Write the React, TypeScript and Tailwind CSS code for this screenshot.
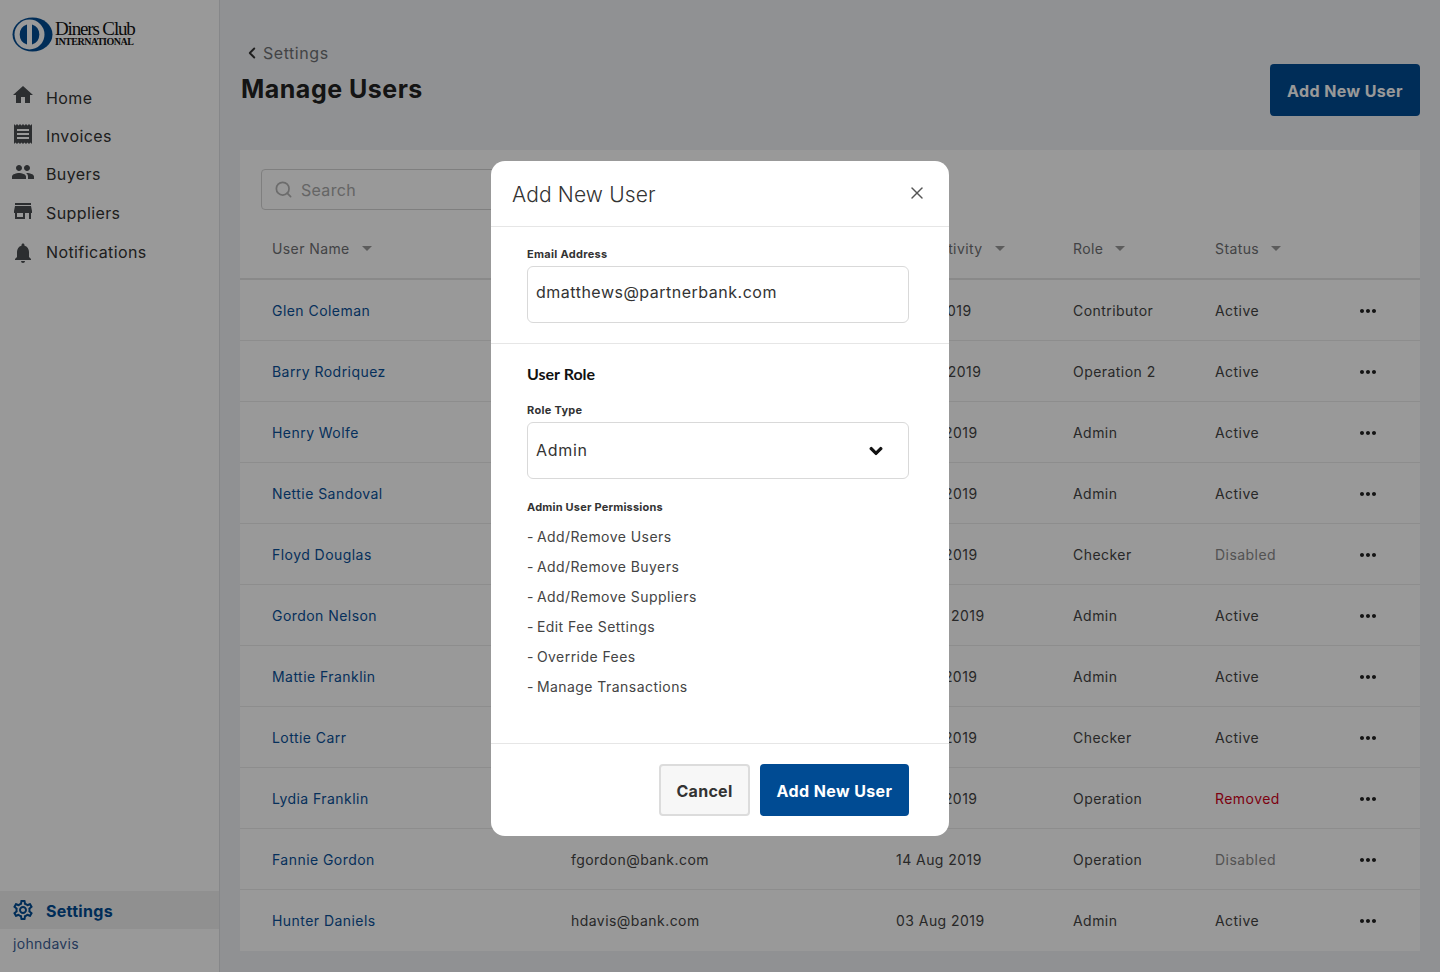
import { Search, X, ChevronLeft } from "lucide-react";
import { FaChevronDown } from "react-icons/fa";
import { MdHome, MdReceipt, MdPeople, MdStore, MdNotifications, MdOutlineSettings, MdMoreHoriz } from "react-icons/md";

const nav = [
  { label: "Home", icon: MdHome, h: "h-[38px]", iconCls: "mb-[6px]" },
  { label: "Invoices", icon: MdReceipt, h: "h-[38px]", iconCls: "mb-[4px]" },
  { label: "Buyers", icon: MdPeople, h: "h-[38px]", iconCls: "mb-[4px]" },
  { label: "Suppliers", icon: MdStore, h: "h-[39px]", iconCls: "mb-[4px]" },
  { label: "Notifications", icon: MdNotifications, h: "h-[39px]", iconCls: "mt-[2px]" },
];

const users = [
  ["Glen Coleman", "gcoleman@bank.com", "11 Jul 2019", "Contributor", "Active"],
  ["Barry Rodriquez", "brodriquez@bank.com", "12 Aug 2019", "Operation 2", "Active"],
  ["Henry Wolfe", "hwolfe@bank.com", "02 Jul 2019", "Admin", "Active"],
  ["Nettie Sandoval", "nsandoval@bank.com", "24 Jul 2019", "Admin", "Active"],
  ["Floyd Douglas", "fdouglas@bank.com", "24 Jul 2019", "Checker", "Disabled"],
  ["Gordon Nelson", "gnelson@bank.com", "08 Aug 2019", "Admin", "Active"],
  ["Mattie Franklin", "mfranklin@bank.com", "28 Jul 2019", "Admin", "Active"],
  ["Lottie Carr", "lcarr@bank.com", "28 Jul 2019", "Checker", "Active"],
  ["Lydia Franklin", "lfranklin@bank.com", "28 Jul 2019", "Operation", "Removed"],
  ["Fannie Gordon", "fgordon@bank.com", "14 Aug 2019", "Operation", "Disabled"],
  ["Hunter Daniels", "hdavis@bank.com", "03 Aug 2019", "Admin", "Active"],
];

const permissions = [
  "Add/Remove Users",
  "Add/Remove Buyers",
  "Add/Remove Suppliers",
  "Edit Fee Settings",
  "Override Fees",
  "Manage Transactions",
];

const cols = "grid grid-cols-[299px_325px_177px_142px_1fr] pl-[32px]";

function HeaderCell({ label }: { label: string }) {
  return (
    <div className="flex items-center gap-[12px] text-[14px] tracking-[0.4px] text-[#6f7174]">
      {label}
      <span className="h-0 w-0 border-x-[5px] border-t-[5px] border-x-transparent border-t-[#9a9a9a]" />
    </div>
  );
}

function statusClass(status: string) {
  if (status === "Removed") return "text-[#d0021b]";
  if (status === "Disabled") return "text-[#8a8a8a]";
  return "text-[#444]";
}

function Logo() {
  return (
    <div className="flex h-[34px] items-center pl-[12px]">
      <svg width="41" height="35" viewBox="0 0 41 35">
        <ellipse cx="20.5" cy="17.5" rx="20" ry="17" fill="#004b93" />
        <circle cx="17.5" cy="17.5" r="15" fill="#fff" />
        <path d="M15 7.5v20a10.5 10.5 0 0 1 0-20z" fill="#004b93" />
        <path d="M20 7.5v20a10.5 10.5 0 0 0 0-20z" fill="#004b93" />
      </svg>
      <div className="mb-[2px] ml-[2px] font-['Liberation_Serif',serif] text-[#111]">
        <div className="text-[19px] leading-[17px] tracking-[-1.15px]">Diners Club</div>
        <div className="text-[10px] leading-[9px] font-bold tracking-[-0.5px]">INTERNATIONAL</div>
      </div>
    </div>
  );
}

export default function App() {
  return (
    <div className="relative flex h-[972px] w-[1440px] overflow-hidden bg-[#f0f2f5] font-['Inter',sans-serif] text-[#333]">
      <aside className="flex w-[220px] shrink-0 flex-col border-r border-[#dfe1e4] bg-white pt-[17px]">
        <Logo />
        <nav className="mt-[28px] flex flex-col">
          {nav.map((item) => (
            <div key={item.label} className={`flex items-center gap-[11px] pl-[11px] text-[16px] tracking-[0.4px] text-[#333] ${item.h}`}>
              <item.icon className={`size-[24px] text-[#4a4d50] ${item.iconCls}`} />
              {item.label}
            </div>
          ))}
        </nav>
        <div className="mt-auto mb-[18px]">
          <div className="flex h-[38px] items-center gap-[11px] bg-[#f0f0f0] pl-[11px] text-[16px] font-bold tracking-[0.3px] text-[#004b93]">
            <MdOutlineSettings className="size-[24px]" />
            <span className="pt-[2px]">Settings</span>
          </div>
          <div className="mt-[4px] pl-[13px] text-[14px] tracking-[0.3px] text-[#3e5f97]">johndavis</div>
        </div>
      </aside>

      <main className="flex min-w-0 flex-1 flex-col pt-[44px] pr-[20px] pb-[22px] pl-[20px]">
        <div className="flex items-start justify-between">
          <div>
            <div className="flex h-[18px] items-center text-[16px] tracking-[0.55px] text-[#6f7174]">
              <ChevronLeft className="mr-[2px] ml-[3px] size-[18px] text-[#333]" strokeWidth={2.5} />
              Settings
            </div>
            <h1 className="mt-[12px] pl-[1px] text-[25px] leading-[30px] font-bold tracking-[0.5px] text-[#222]">Manage Users</h1>
          </div>
          <button className="mt-[20px] h-[52px] w-[150px] rounded-[4px] bg-[#004b93] pt-[2px] text-[16px] font-bold tracking-[0.4px] text-white">
            Add New User
          </button>
        </div>

        <section className="mt-[34px] flex-1 bg-white">
          <div className="px-[21px] pt-[19px]">
            <div className="flex h-[41px] w-[330px] items-center gap-[8px] rounded-[4px] border border-[#d4d4d4] pl-[12px] text-[16px] tracking-[0.3px] text-[#a8a8a8]">
              <Search className="size-[19px] text-[#b5b5b5]" strokeWidth={2.2} />
              Search
            </div>
          </div>
          <div className={`${cols} h-[70px] items-center border-b-2 border-[#e4e4e4] pt-[8px]`}>
            <HeaderCell label="User Name" />
            <HeaderCell label="Email" />
            <HeaderCell label="Last Activity" />
            <HeaderCell label="Role" />
            <HeaderCell label="Status" />
          </div>
          {users.map((u, i) => (
            <div
              key={u[0]}
              className={`${cols} h-[61px] items-center text-[14px] tracking-[0.45px] text-[#444] ${i < users.length - 1 ? "border-b border-[#ececec]" : ""}`}
            >
              <div className="text-[#0a5199]">{u[0]}</div>
              <div>{u[1]}</div>
              <div>{u[2]}</div>
              <div>{u[3]}</div>
              <div className="flex items-center justify-between pr-[40px]">
                <span className={statusClass(u[4])}>{u[4]}</span>
                <MdMoreHoriz className="mt-[1px] size-[24px] text-[#222]" />
              </div>
            </div>
          ))}
        </section>
      </main>

      <div className="absolute inset-0 flex justify-center bg-black/40 pt-[161px]">
        <div className="flex h-[675px] w-[458px] flex-col rounded-[14px] bg-white">
          <header className="flex h-[66px] shrink-0 items-center justify-between border-b border-[#e6e6e6] pr-[22px] pl-[21px]">
            <h2 className="pt-[3px] text-[21px] font-light tracking-[0.15px] text-[#333]">Add New User</h2>
            <X className="mb-[1px] size-[20px] text-[#555]" strokeWidth={1.7} />
          </header>
          <div className="h-[117px] shrink-0 border-b border-[#e6e6e6] pt-[20px] pr-[40px] pl-[36px]">
            <label className="block text-[11px] leading-[14px] font-bold tracking-[0.3px] text-[#333]">Email Address</label>
            <div className="mt-[5px] flex h-[57px] items-center rounded-[6px] border border-[#d9d9d9] pb-[5px] pl-[8px] text-[16px] tracking-[0.5px] text-[#333]">
              dmatthews@partnerbank.com
            </div>
          </div>
          <div className="flex-1 pt-[20px] pr-[40px] pl-[36px]">
            <h3 className="font-['Lato',sans-serif] text-[16px] leading-[20px] font-bold text-[#111]">User Role</h3>
            <label className="mt-[19px] block text-[11px] leading-[14px] font-bold tracking-[0.3px] text-[#333]">Role Type</label>
            <div className="mt-[5px] flex h-[57px] items-center justify-between rounded-[6px] border border-[#d9d9d9] pr-[25px] pl-[8px] text-[16px] tracking-[0.7px] text-[#333]">
              <span className="pb-[2px]">Admin</span>
              <FaChevronDown className="size-[14px] text-[#111]" stroke="currentColor" strokeWidth={40} />
            </div>
            <div className="mt-[21px] text-[11px] leading-[14px] font-bold tracking-[0.2px] text-[#333]">Admin User Permissions</div>
            <ul className="mt-[7px] flex flex-col text-[14px] tracking-[0.45px] text-[#444]">
              {permissions.map((p) => (
                <li key={p} className="flex h-[30px] items-center gap-[3px]">
                  <span>-</span>
                  {p}
                </li>
              ))}
            </ul>
          </div>
          <footer className="flex h-[93px] shrink-0 justify-end gap-[10px] border-t border-[#e6e6e6] px-[40px] pt-[20px]">
            <button className="h-[52px] w-[91px] rounded-[4px] border-2 border-[#dcdcdc] bg-[#f7f7f7] pt-[2px] text-[16px] font-bold tracking-[0.3px] text-[#333]">
              Cancel
            </button>
            <button className="h-[52px] w-[149px] rounded-[4px] bg-[#004b93] pt-[2px] text-[16px] font-bold tracking-[0.4px] text-white">
              Add New User
            </button>
          </footer>
        </div>
      </div>
    </div>
  );
}
